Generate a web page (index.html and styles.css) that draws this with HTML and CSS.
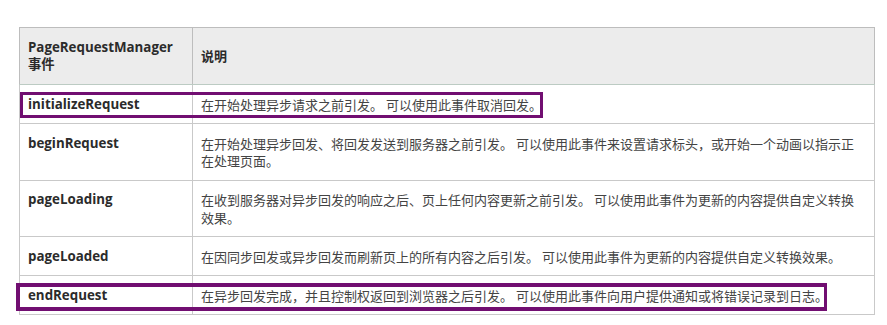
FILE: index.html
```html
<!DOCTYPE html>
<html lang="zh-CN">
<head>
<meta charset="utf-8">
<title>PageRequestManager 事件</title>
<link rel="stylesheet" href="styles.css">
</head>
<body>
<div class="page">
  <table class="events">
    <colgroup>
      <col class="col-name">
      <col class="col-desc">
    </colgroup>
    <thead>
      <tr>
        <th class="name">PageRequestManager<br>事件</th>
        <th class="desc head-desc">说明</th>
      </tr>
    </thead>
    <tbody>
      <tr>
        <td class="name">initializeRequest</td>
        <td class="desc">在开始处理异步请求之前引发。 可以使用此事件取消回发。</td>
      </tr>
      <tr>
        <td class="name">beginRequest</td>
        <td class="desc">在开始处理异步回发、将回发发送到服务器之前引发。 可以使用此事件来设置请求标头，或开始一个动画以指示正在处理页面。</td>
      </tr>
      <tr>
        <td class="name">pageLoading</td>
        <td class="desc">在收到服务器对异步回发的响应之后、页上任何内容更新之前引发。 可以使用此事件为更新的内容提供自定义转换效果。</td>
      </tr>
      <tr>
        <td class="name">pageLoaded</td>
        <td class="desc">在因同步回发或异步回发而刷新页上的所有内容之后引发。 可以使用此事件为更新的内容提供自定义转换效果。</td>
      </tr>
      <tr>
        <td class="name">endRequest</td>
        <td class="desc">在异步回发完成，并且控制权返回到浏览器之后引发。 可以使用此事件向用户提供通知或将错误记录到日志。</td>
      </tr>
    </tbody>
  </table>
  <div class="mark mark-init"></div>
  <div class="mark mark-end"></div>
</div>
</body>
</html>
```
FILE: styles.css
```css
html, body {
  margin: 0;
  padding: 0;
  background: #ffffff;
}

.page {
  position: relative;
  width: 887px;
  height: 325px;
  padding: 27px 0 0 19px;
  box-sizing: border-box;
  font-family: "Noto Sans CJK SC", sans-serif;
}

.events {
  border-collapse: collapse;
  table-layout: fixed;
  width: 855px;
  border: 1px solid #bdbdbd;
}

.col-name { width: 173px; }
.col-desc { width: 682px; }

.events th,
.events td {
  border: 1px solid #c9c9c9;
  text-align: left;
  vertical-align: top;
  padding: 10.5px 13px 10px 8px;
  font-size: 13px;
  line-height: 17.5px;
}

.events thead th {
  background: #ececec;
  border-color: #bdbdbd;
  border-bottom-color: #bccbc3;
  font-weight: bold;
  color: #2b2b2b;
  padding-top: 10.5px;
  padding-bottom: 10.5px;
}

.events th.head-desc {
  vertical-align: middle;
}

.events .name {
  font-family: "Open Sans", "Noto Sans CJK SC", sans-serif;
  font-size: 13.33px;
  font-weight: bold;
  color: #2b2b2b;
  overflow: hidden;
  white-space: nowrap;
}

.events thead .name {
  white-space: normal;
}

.events td.desc {
  font-family: "Noto Sans CJK SC", sans-serif;
  color: #444444;
}

.mark {
  position: absolute;
  border: 3px solid #710e71;
  box-sizing: border-box;
}

.mark-init {
  top: 92px;
  left: 20px;
  width: 523px;
  height: 26px;
}

.mark-end {
  top: 283px;
  left: 16px;
  width: 811px;
  height: 28px;
  border-width: 4px 3px 4px 4px;
}
```
